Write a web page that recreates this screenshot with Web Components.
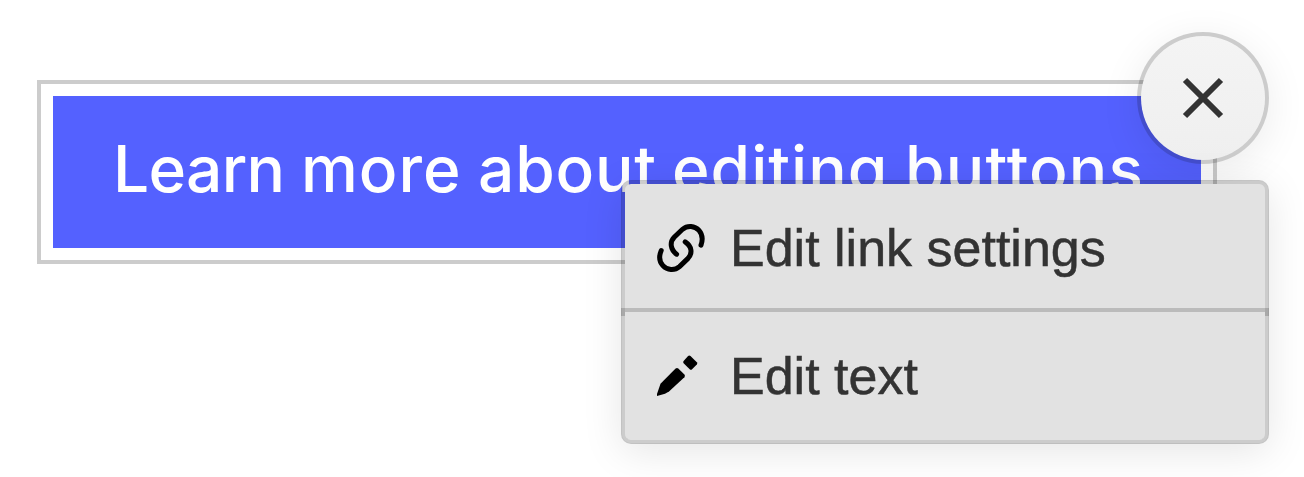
<!DOCTYPE html>
<html lang="en">
<head>
<meta charset="utf-8">
<title>Button editor</title>
<style>
html,body{margin:0;background:#fff;overflow:hidden}
</style>
</head>
<body>
<button-editor>
  <editable-button><span>Learn</span> <span>more</span> <span>about</span> <span>editing</span> <span>buttons</span></editable-button>
  <close-button slot="close"></close-button>
  <context-menu slot="menu">
    <menu-item>
      <svg slot="icon" width="56" height="56" viewBox="0 0 56 56" fill="none" stroke="#000" stroke-width="5" stroke-linecap="round"><path d="M23.6 34.2C17.5 29.8 16.4 22.3 21.2 17.3L29.5 9.3C34.6 5 41.8 5.7 46 10.4C49.4 14.3 50 19.5 48 25.2"/><path d="M32.2 21.8C38.8 26.2 39.8 33.2 35 38.4L26.5 46.6C21.4 51 14.2 50.3 9.9 45.6C6.3 41.7 5.7 36.6 8.2 30.6"/></svg>
      Edit link settings
    </menu-item>
    <menu-item>
      <svg slot="icon" width="56" height="56" viewBox="0 0 56 56" fill="#000"><path d="M4 48V46L7.5 35.8L22.6 20.6Q24 19.4 25.3 20.6L31.4 26.6Q32.5 28 31.4 29.2L16 43.6L12 45.7Z"/><path d="M30.6 15.2Q29.7 14.1 30.6 13L35.1 8.1Q36.3 7.1 37.5 8.1L43.8 14.2Q44.8 15.3 43.8 16.5L39.1 21.3Q37.9 22.3 36.7 21.3Z"/></svg>
      Edit text
    </menu-item>
  </context-menu>
</button-editor>
<script>
const define = (name, html) => customElements.define(name, class extends HTMLElement {
  constructor() {
    super();
    this.attachShadow({ mode: 'open' }).innerHTML = html;
  }
});

define('button-editor', `
<style>
:host{display:block;position:relative;box-sizing:border-box;width:1304px;height:477px;padding:80px 87px 0 37px}
.frame{box-sizing:border-box;height:184px;border:4px solid #ccc;padding:12px}
::slotted([slot=close]){position:absolute;left:1137px;top:32px}
::slotted([slot=menu]){position:absolute;left:621px;top:180px}
</style>
<div class="frame"><slot></slot></div>
<slot name="close"></slot>
<slot name="menu"></slot>`);

define('editable-button', `
<style>
:host{display:grid;grid-template-columns:188px 177px 194px 233px auto;align-items:center;box-sizing:border-box;height:152px;padding:0 0 7px 60px;background:#5461ff;color:#fff;
font:450 64px/1 Inter,sans-serif;letter-spacing:-.7px;white-space:nowrap}
::slotted(:nth-child(2)){letter-spacing:1px}
::slotted(:nth-child(3)){letter-spacing:.8px}
::slotted(:nth-child(4)){letter-spacing:1px}
::slotted(:nth-child(5)){letter-spacing:1.2px}
</style>
<slot></slot>`);

define('close-button', `
<style>
:host{display:flex;align-items:center;justify-content:center;box-sizing:border-box;width:132px;height:132px;border:4px solid rgba(0,0,0,.2);border-radius:50%;
background:linear-gradient(#f4f4f4,#efefef);background-clip:padding-box;box-shadow:0 8px 40px rgba(0,0,0,.08)}
svg{display:block}
</style>
<svg width="44" height="44" viewBox="0 0 44 44" stroke="#333" stroke-width="6"><path d="M4 4L40 40M40 4L4 40"/></svg>`);

define('context-menu', `
<style>
:host{display:block;box-sizing:border-box;width:648px;height:264px;border:4px solid rgba(0,0,0,.2);border-radius:10px;
background:#e2e2e2;background-clip:padding-box;box-shadow:0 8px 40px rgba(0,0,0,.1)}
.items{display:grid;grid-template-rows:124px 128px;row-gap:4px;position:relative}
.rule{position:absolute;left:0;right:0;top:124px;height:4px;background:#bbb}
.rule::before,.rule::after{content:"";position:absolute;top:0;width:4px;height:8px;background:rgba(0,0,0,.17)}
.rule::before{left:-4px}
.rule::after{right:-4px}
::slotted(:first-child){padding-top:4px}
</style>
<div class="items"><slot></slot><div class="rule"></div></div>`);

define('menu-item', `
<style>
:host{display:flex;align-items:center;gap:21px;padding-left:28px;color:#333;font:400 52px/60px "Liberation Sans",Arial,sans-serif;-webkit-text-stroke:.5px #333;white-space:nowrap}
::slotted(svg){display:block;flex:none}
</style>
<slot name="icon"></slot><span><slot></slot></span>`);
</script>
</body>
</html>
